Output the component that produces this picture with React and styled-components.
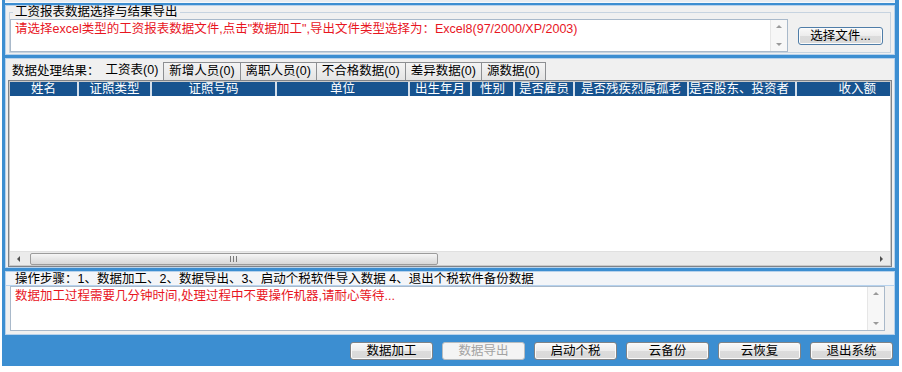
import React from 'react';
import styled, { createGlobalStyle } from 'styled-components';

const GlobalStyle = createGlobalStyle`
  html, body { margin: 0; padding: 0; background: #ffffff; }
  body {
    font-family: "Liberation Sans", "Noto Sans CJK SC", sans-serif;
    font-size: 12.5px;
    color: #000;
  }
  * { box-sizing: border-box; }
`;

const BLUE = '#3c8ed1';
const RED = '#e8161f';

const Frame = styled.div`
  width: 897px;
  height: 366px;
  margin-left: 2px;
  background: ${BLUE};
  padding: 0 4px 0 3px;
  display: flex;
  flex-direction: column;
`;

const TopStrip = styled.div`
  height: 3px;
  background: #e9edf1;
  border-bottom: 1px solid #f7f9fb;
`;

const Panel = styled.section`
  background: #f0f0f0;
  border: 1px solid #b7d2ec;
  margin-top: ${(p) => p.$gap}px;
  height: ${(p) => (p.$h ? `${p.$h}px` : 'auto')};
  display: flex;
  flex-direction: column;
  flex-shrink: 0;
`;

const Fieldset = styled.fieldset`
  margin: 0 3px 1px 3px;
  padding: 0 2px 0 0;
  border: 1px solid #c6d3e0;
  min-width: 0;
  display: flex;
  align-items: center;
  gap: 10px;
`;

const Legend = styled.legend`
  font-size: 12.5px;
  line-height: 13px;
  padding: 0 2px;
  margin-left: 3px;
`;

const TextBox = styled.div`
  width: ${(p) => p.$w}px;
  height: ${(p) => p.$h}px;
  background: #fff;
  border: 1px solid #a9b9ca;
  display: flex;
  flex-shrink: 0;
`;

const RedText = styled.div`
  flex: 1;
  color: ${RED};
  padding: ${(p) => p.$pad};
  line-height: 14px;
  white-space: nowrap;
  overflow: hidden;
`;

const VScroll = styled.div`
  width: 17px;
  background: #f7f7f7;
  border-left: 1px solid #e6e6e6;
  display: flex;
  flex-direction: column;
  justify-content: space-between;
  align-items: center;
  padding: 5px 0 5px;
`;

const Button = styled.button`
  width: ${(p) => p.$w || 83}px;
  height: 18px;
  padding: 0;
  font-family: inherit;
  font-size: 12.5px;
  line-height: 16px;
  color: ${(p) => (p.disabled ? '#a3a3a3' : '#000')};
  background: ${(p) =>
    p.disabled ? '#f4f4f4' : 'linear-gradient(#f9f9f9, #ececec 50%, #dcdcdc 51%, #d9d9d9)'};
  border: 1px solid ${(p) => (p.disabled ? '#b8bcbf' : p.$focus ? '#4f7da8' : '#808386')};
  border-radius: 3px;
  box-shadow: inset 0 0 0 1px ${(p) => (p.disabled ? '#f4f4f4' : '#fbfbfb')};
  flex-shrink: 0;
`;

const TabBar = styled.div`
  height: 21px;
  display: flex;
  align-items: flex-end;
  padding-left: 6px;
`;

const TabLabel = styled.div`
  height: 18px;
  line-height: 18px;
  white-space: nowrap;
`;

const Tab = styled.div`
  height: ${(p) => (p.$active ? 19 : 18)}px;
  line-height: ${(p) => (p.$active ? 18 : 16)}px;
  padding: ${(p) => (p.$active ? '0 6px 0 6px' : '0 5px')};
  white-space: nowrap;
  margin-left: ${(p) => (p.$active ? 0 : -1)}px;
  border: ${(p) => (p.$active ? 'none' : '1px solid #8d8f92')};
  border-bottom: none;
  background: ${(p) => (p.$active ? '#f0f0f0' : 'linear-gradient(#f4f4f4, #e4e4e4)')};
`;

const TableFrame = styled.div`
  flex: 1;
  margin: 0 2px;
  border: 1px solid #7f8389;
  padding: 1px;
  background: #fff;
  display: flex;
  flex-direction: column;
  box-shadow: inset 0 0 0 1px #c9c9c9;
`;

const HeaderRow = styled.div`
  display: flex;
  height: 14px;
  background: #17538f;
`;

const HeaderCell = styled.div`
  width: ${(p) => p.$w}px;
  border-left: ${(p) => (p.$first ? 'none' : '2px solid #d4dfeb')};
  color: #fff;
  text-align: ${(p) => p.$align || 'center'};
  padding-right: ${(p) => (p.$align === 'right' ? 14 : 0)}px;
  line-height: 14px;
  white-space: nowrap;
  overflow: hidden;
  flex-shrink: 0;
`;

const TableBody = styled.div`
  flex: 1;
  background: #fff;
`;

const HScroll = styled.div`
  height: 14px;
  background: #ebebeb;
  border-top: 1px solid #e0e0e0;
  display: flex;
  align-items: center;
`;

const ArrowBox = styled.div`
  width: 17px;
  height: 100%;
  display: flex;
  align-items: center;
  justify-content: center;
  flex-shrink: 0;
`;

const Thumb = styled.div`
  width: ${(p) => p.$w}px;
  height: 12px;
  margin-left: 3px;
  border: 1px solid #9c9c9c;
  border-radius: 2px;
  background: linear-gradient(#f6f6f6, #e6e6e6 50%, #d8d8d8);
  display: flex;
  align-items: center;
  justify-content: center;
  flex-shrink: 0;
`;

const Spacer = styled.div`
  flex: 1;
`;

const StepRow = styled.div`
  height: 14px;
  line-height: 14px;
  padding-left: 9px;
  border-bottom: 1px solid #b6d2ee;
  background: #f3f5f8;
  white-space: nowrap;
`;

const OpBody = styled.div`
  padding: 0 0 3px 4px;
`;

const ButtonBar = styled.div`
  flex: 1;
  display: flex;
  justify-content: flex-end;
  align-items: flex-start;
  padding: 7px 2px 0 0;
  gap: 9px;
`;

const Tri = ({ dir, color = '#6a6a6a', size = 4 }) => {
  const s = size;
  const pts = {
    up: `0,${s} ${s},0 ${2 * s},${s}`,
    down: `0,0 ${s},${s} ${2 * s},0`,
    left: `${s},0 0,${s} ${s},${2 * s}`,
    right: `0,0 ${s},${s} 0,${2 * s}`,
  }[dir];
  const vertical = dir === 'up' || dir === 'down';
  return (
    <svg width={vertical ? 2 * s : s} height={vertical ? s : 2 * s}>
      <polygon points={pts} fill={color} />
    </svg>
  );
};

const Grip = () => (
  <svg width="8" height="6">
    <rect x="0" y="0" width="1" height="6" fill="#7a7a7a" />
    <rect x="3" y="0" width="1" height="6" fill="#7a7a7a" />
    <rect x="6" y="0" width="1" height="6" fill="#7a7a7a" />
  </svg>
);

const columns = [
  { t: '姓名', w: 67 },
  { t: '证照类型', w: 73 },
  { t: '证照号码', w: 125 },
  { t: '单位', w: 133 },
  { t: '出生年月', w: 62 },
  { t: '性别', w: 43 },
  { t: '是否雇员', w: 60 },
  { t: '是否残疾烈属孤老', w: 114 },
  { t: '是否股东、投资者', w: 108, align: 'left' },
  { t: '收入额', w: 95, align: 'right' },
];

const tabs = ['新增人员(0)', '离职人员(0)', '不合格数据(0)', '差异数据(0)', '源数据(0)'];

const actions = ['数据加工', '数据导出', '启动个税', '云备份', '云恢复', '退出系统'];

export default function App() {
  return (
    <>
      <GlobalStyle />
      <Frame>
        <TopStrip />
        <Panel $gap={2} $h={50}>
          <Fieldset>
            <Legend>工资报表数据选择与结果导出</Legend>
            <TextBox $w={778} $h={33}>
              <RedText $pad="2px 4px">
                请选择excel类型的工资报表数据文件,点击"数据加工",导出文件类型选择为：Excel8(97/2000/XP/2003)
              </RedText>
              <VScroll>
                <Tri dir="up" color="#9a9a9a" size={3} />
                <Tri dir="down" color="#9a9a9a" size={3} />
              </VScroll>
            </TextBox>
            <Button $w={85} $focus>选择文件...</Button>
          </Fieldset>
        </Panel>

        <Panel $gap={3} $h={210}>
          <TabBar>
            <TabLabel>数据处理结果：</TabLabel>
            <Tab $active>工资表(0)</Tab>
            {tabs.map((t) => (
              <Tab key={t}>{t}</Tab>
            ))}
          </TabBar>
          <TableFrame>
            <HeaderRow>
              {columns.map((c, i) => (
                <HeaderCell key={c.t} $w={c.w} $first={i === 0} $align={c.align}>
                  {c.t}
                </HeaderCell>
              ))}
            </HeaderRow>
            <TableBody />
            <HScroll>
              <ArrowBox>
                <Tri dir="left" color="#505050" size={3} />
              </ArrowBox>
              <Thumb $w={408}>
                <Grip />
              </Thumb>
              <Spacer />
              <ArrowBox>
                <Tri dir="right" color="#505050" size={3} />
              </ArrowBox>
            </HScroll>
          </TableFrame>
        </Panel>

        <Panel $gap={3} $h={64}>
          <StepRow>操作步骤：1、数据加工、2、数据导出、3、启动个税软件导入数据 4、退出个税软件备份数据</StepRow>
          <OpBody>
            <TextBox $w={875} $h={45}>
              <RedText $pad="2px 4px">数据加工过程需要几分钟时间,处理过程中不要操作机器,请耐心等待...</RedText>
              <VScroll>
                <Tri dir="up" color="#9a9a9a" size={3} />
                <Tri dir="down" color="#9a9a9a" size={3} />
              </VScroll>
            </TextBox>
          </OpBody>
        </Panel>

        <ButtonBar>
          {actions.map((a) => (
            <Button key={a} disabled={a === '数据导出'}>
              {a}
            </Button>
          ))}
        </ButtonBar>
      </Frame>
    </>
  );
}
